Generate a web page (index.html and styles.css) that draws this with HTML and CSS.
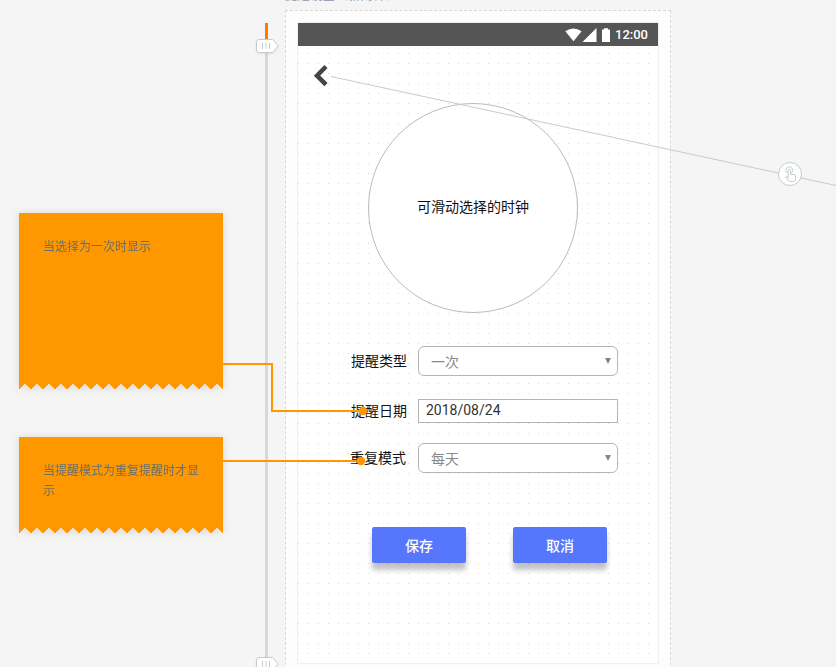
FILE: index.html
```
<!DOCTYPE html>
<html lang="zh-CN">
<head>
<meta charset="utf-8">
<title>提醒设置</title>
<link rel="stylesheet" href="styles.css">
</head>
<body>
<main class="canvas">
  <div class="ruler"><span class="ruler-start"></span></div>
  <svg class="handle handle-top" width="26" height="20" viewBox="0 0 26 20"><path d="M4 3.500H17.500L23.300 9.900 17.500 16.500H4Q1.500 16.500 1.500 14V6Q1.500 3.500 4 3.500Z"/><path d="M7.500 7v6M11 7v6M14.500 7v6"/></svg>
  <svg class="handle handle-bottom" width="26" height="20" viewBox="0 0 26 20"><path d="M4 3.500H17.500L23.300 9.900 17.500 16.500H4Q1.500 16.500 1.500 14V6Q1.500 3.500 4 3.500Z"/><path d="M7.500 7v6M11 7v6M14.500 7v6"/></svg>

  <div class="frame-title">提醒设置（新闹钟）</div>
  <section class="frame">
    <div class="phone">
      <header class="status">
        <svg width="46" height="15" viewBox="0 0 46 15"><path d="M.3 3.200Q8.300-2.200 16.600 3.200L8.500 13.300Z"/><path d="M17.500 14 31.500 0V14Z"/><path d="M37 1.500h2V.3h4v1.200h2V14H37Z"/></svg>
        <span>12:00</span>
      </header>
      <nav class="nav"><svg width="16" height="24" viewBox="0 0 16 24"><path d="M13 2.500 4 11.700 13 20.600"/></svg></nav>
      <div class="clock">可滑动选择的时钟</div>
      <form class="form">
        <div class="row row-type"><label>提醒类型</label><div class="select"><span>一次</span><i></i></div></div>
        <div class="row row-date"><label>提醒日期</label><div class="input">2018/08/24</div></div>
        <div class="row row-repeat"><label>重复模式</label><div class="select"><span>每天</span><i></i></div></div>
      </form>
      <div class="actions"><div class="button">保存</div><div class="button">取消</div></div>
    </div>
  </section>

  <aside class="note note-once"><p>当选择为一次时显示</p></aside>
  <aside class="note note-repeat"><p>当提醒模式为重复提醒时才显示</p></aside>

  <svg class="links" width="836" height="667" viewBox="0 0 836 667">
    <path class="link" d="M331 76.500 836 185.500"/>
    <path class="wire" d="M223 364H272V411H363M223 461H361"/>
    <circle class="pin" cx="363" cy="411" r="4.200"/><circle class="pin" cx="361" cy="461" r="4.200"/>
    <circle class="tap" cx="790" cy="174" r="11.500"/>
    <path class="hand" d="M787.300 173A3.400 3.400 0 1 1 791.200 173M788 178.500V170.500Q788 169.300 789.200 169.300T790.400 170.500V174.500H794Q795.500 174.500 795.500 176V179.500Q795.500 181.500 793.500 181.500H789.500L785.500 177.300Q786.300 176 788 177.500"/>
  </svg>
</main>
</body>
</html>
```
FILE: styles.css
```
* { box-sizing: border-box; }
body {
  margin: 0;
  background: #f5f5f5;
  font-family: Roboto, "Noto Sans CJK SC", sans-serif;
}
.canvas { position: relative; width: 836px; height: 667px; overflow: hidden; }
.ruler { position: absolute; left: 265px; top: 23px; width: 3px; height: 644px; background: #d8d8d8; }
.ruler-start { display: block; height: 17px; background: #ff7a00; }
.handle {
  position: absolute;
  left: 255px;
  fill: #fff;
  stroke: #c5cccf;
  filter: drop-shadow(0 1px 1px rgba(0, 0, 0, .08));
}
.handle-top { top: 36px; }
.handle-bottom { top: 654px; }
.frame-title { position: absolute; left: 285px; top: -13px; font-size: 12px; line-height: 18px; letter-spacing: .6px; color: #8d93a6; white-space: nowrap; }
.frame {
  position: absolute;
  left: 285px;
  top: 10px;
  width: 386px;
  height: 680px;
  padding: 11px;
  border: 1px dashed #d8d8d8;
  background: #fdfdfd;
}
.phone {
  width: 362px;
  height: 642px;
  display: flex;
  flex-direction: column;
  border: 1px solid #f0f0f0;
  background: #fff conic-gradient(from 0deg at 1px 1px, transparent 270deg, #dadada 0) 0 0 / 10px 10px;
}
.status {
  flex: none;
  height: 23px;
  padding-right: 10px;
  display: flex;
  align-items: center;
  justify-content: flex-end;
  gap: 4px;
  background: #555;
  color: #fff;
  font-size: 13px;
  font-weight: 500;
}
.status svg { margin-top: 1px; fill: #fff; }
.nav { height: 57px; padding: 18px 0 0 15px; }
.nav svg { display: block; fill: none; stroke: #444; stroke-width: 4.500; }
.clock {
  flex: none;
  width: 210px;
  height: 210px;
  margin-left: 70px;
  padding-bottom: 5px;
  display: flex;
  align-items: center;
  justify-content: center;
  border: 1px solid #bbb;
  border-radius: 50%;
  background: #fff;
  color: #111;
  font-size: 14px;
}
.form { display: flex; flex-direction: column; padding: 33px 40px 0 53px; }
.row { display: flex; align-items: center; justify-content: space-between; font-size: 14px; color: #111; }
.row label { padding-bottom: 2px; }
.row-date { margin-top: 23px; }
.row-repeat { margin-top: 20px; }
.row-repeat label { margin-left: -1px; }
.select {
  width: 200px;
  height: 30px;
  padding: 0 6px 0 12px;
  display: flex;
  align-items: center;
  justify-content: space-between;
  border: 1px solid #b5b5b5;
  border-radius: 6px;
  background: #fff;
  color: #888;
}
.select i { border: 3px solid transparent; border-top: 6px solid #858585; border-bottom: 0; }
.input { width: 200px; height: 24px; padding-left: 7px; border: 1px solid #b5b5b5; background: #fff; color: #333; line-height: 21px; }
.actions { display: flex; gap: 47px; padding: 54px 0 0 74px; }
.button {
  width: 94px;
  height: 36px;
  line-height: 38px;
  text-align: center;
  border-radius: 2px;
  background: #5677fc;
  color: #fff;
  font-size: 14px;
  font-weight: 500;
  box-shadow: 0 7px 5px rgba(0, 0, 0, .24);
}
.note {
  position: absolute;
  left: 19px;
  width: 204px;
  padding: 24px;
  background:
    linear-gradient(#ff9800, #ff9800) 0 0 / 100% calc(100% - 6px) no-repeat,
    linear-gradient(135deg, #ff9800 4.600px, transparent 0) 0 100% / 12px 6px repeat-x,
    linear-gradient(225deg, #ff9800 4.600px, transparent 0) 0 100% / 12px 6px repeat-x;
  filter: drop-shadow(0 1px 4px rgba(0, 0, 0, .12));
  color: #66706c;
  font-size: 12px;
  line-height: 20px;
}
.note p { margin: 0 -2px 0 0; }
.note-once { top: 213px; height: 176px; }
.note-repeat { top: 437px; height: 96px; }
.links { position: absolute; left: 0; top: 0; pointer-events: none; }
.link, .hand { fill: none; stroke: #c5cccf; }
.wire { fill: none; stroke: #ff9800; stroke-width: 2; }
.pin { fill: #ff9800; }
.tap { fill: #fff; stroke: #c5cccf; }
```
